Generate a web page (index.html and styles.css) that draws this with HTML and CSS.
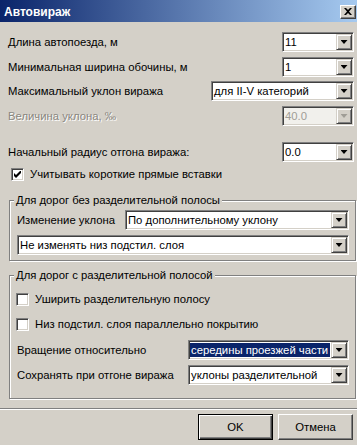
FILE: index.html
```html
<!DOCTYPE html>
<html lang="ru">

<head>
   <meta charset="UTF-8">
   <meta name="viewport" content="width=device-width, initial-scale=1.0">
   <title>Автовираж</title>
   <link rel="stylesheet" href="styles.css">
</head>

<body>
   <div class="window">
      <div class="titlebar">
         <span class="title">Автовираж</span>
         <span class="close-btn">
            <svg width="8" height="7" viewBox="0 0 8 7"><path d="M0 0h2l2 2 2-2h2L5 3.5 8 7H6L4 5 2 7H0l3-3.5z" fill="#000"/></svg>
         </span>
      </div>

      <div class="content">
         <div class="row">
            <span class="label">Длина автопоезда, м</span>
            <div class="combo"><span class="value">11</span><span class="drop"></span></div>
         </div>
         <div class="row row-2">
            <span class="label">Минимальная ширина обочины, м</span>
            <div class="combo"><span class="value">1</span><span class="drop"></span></div>
         </div>
         <div class="row row-3">
            <span class="label">Максимальный уклон виража</span>
            <div class="combo wide"><span class="value">для II-V категорий</span><span class="drop"></span></div>
         </div>
         <div class="row row-4">
            <span class="label disabled">Величина уклона, ‰</span>
            <div class="combo disabled"><span class="value">40.0</span><span class="drop"></span></div>
         </div>
         <div class="row row-5">
            <span class="label">Начальный радиус отгона виража:</span>
            <div class="combo"><span class="value">0.0</span><span class="drop"></span></div>
         </div>

         <label class="check check-top">
            <span class="box">
               <svg width="7" height="7" viewBox="0 0 7 7"><polygon points="0,2 2,4 7,-1 7,2 2,7 0,5" fill="#000"/></svg>
            </span>
            Учитывать короткие прямые вставки
         </label>

         <!-- roads without a median -->
         <fieldset class="group group-1">
            <legend>Для дорог без разделительной полосы</legend>
            <div class="row">
               <span class="label">Изменение уклона</span>
               <div class="combo slope"><span class="value">По дополнительному уклону</span><span class="drop"></span></div>
            </div>
            <div class="row row-2">
               <div class="combo full"><span class="value">Не изменять низ подстил. слоя</span><span class="drop"></span></div>
            </div>
         </fieldset>

         <!-- roads with a median -->
         <fieldset class="group group-2">
            <legend>Для дорог с разделительной полосой</legend>
            <label class="check check-1"><span class="box"></span>Уширить разделительную полосу</label>
            <label class="check check-2"><span class="box"></span>Низ подстил. слоя параллельно покрытию</label>
            <div class="row row-rot">
               <span class="label">Вращение относительно</span>
               <div class="combo median"><span class="value selected">середины проезжей части</span><span class="drop"></span></div>
            </div>
            <div class="row row-2">
               <span class="label">Сохранять при отгоне виража</span>
               <div class="combo median"><span class="value">уклоны разделительной</span><span class="drop"></span></div>
            </div>
         </fieldset>
      </div>

      <div class="separator"></div>

      <div class="buttons">
         <button class="btn default">OK</button>
         <button class="btn">Отмена</button>
      </div>
   </div>
</body>

</html>
```

FILE: styles.css
```css
body {
   margin: 0;
   background-color: #d4d0c8;
   font-family: "Liberation Sans", Arial, sans-serif;
   font-size: 11.3px;
   color: #000;
}

.window {
   width: 357px;
   height: 445px;
   overflow: hidden;
}

/* Title bar */
.titlebar {
   box-sizing: border-box;
   height: 22px;
   display: flex;
   align-items: center;
   justify-content: space-between;
   padding: 1px 1px 0 4px;
   background: linear-gradient(to right, #0a246a, #a6caf0);
   color: #fff;
   font-weight: bold;
   font-size: 12px;
}

.close-btn {
   box-sizing: border-box;
   width: 16px;
   height: 14px;
   display: flex;
   align-items: center;
   justify-content: center;
   background-color: #d4d0c8;
   border: 1px solid;
   border-color: #fff #404040 #404040 #fff;
   box-shadow: inset -1px -1px #808080;
}

.content {
   padding: 10px 3px 0 8px;
}

.row {
   display: flex;
   align-items: center;
   justify-content: space-between;
   height: 20px;
}

.row-2 { margin-top: 5px; }
.row-3 { margin-top: 4px; }
.row-4 { margin-top: 5px; }
.row-5 { margin-top: 16px; }

.label.disabled {
   color: #8a8780;
   text-shadow: 1px 1px #fff;
}

/* Combo box */
.combo {
   box-sizing: border-box;
   width: 72px;
   height: 20px;
   display: flex;
   padding: 1px;
   background-color: #fff;
   border: 1px solid;
   border-color: #808080 #fff #fff #808080;
   box-shadow: inset 1px 1px #404040, inset -1px -1px #d4d0c8;
}

.combo.wide { width: 143px; }
.combo.slope { width: 224px; }
.combo.full { width: 100%; }
.combo.median { width: 161px; }

.combo .value {
   flex: 1;
   padding-left: 1px;
   line-height: 16px;
   white-space: nowrap;
   overflow: hidden;
}

.combo .value.selected {
   margin: 1px 1px 1px 0;
   line-height: 14px;
   background-color: #0a246a;
   color: #fff;
}

.combo.disabled {
   background-color: #f1f0ec;
}

.combo.disabled .value {
   color: #a09d96;
}

.drop {
   box-sizing: border-box;
   width: 16px;
   height: 16px;
   display: flex;
   align-items: center;
   justify-content: center;
   background-color: #d4d0c8;
   border: 1px solid;
   border-color: #d4d0c8 #404040 #404040 #d4d0c8;
   box-shadow: inset 1px 1px #fff, inset -1px -1px #808080;
}

.drop::after {
   content: "";
   width: 7px;
   height: 4px;
   background-color: #000;
   clip-path: polygon(0 0, 100% 0, 50% 100%);
}

.combo.disabled .drop::after {
   background-color: #a09d96;
}

/* Check boxes */
.check {
   display: flex;
   align-items: center;
   height: 14px;
}

.check .box {
   box-sizing: border-box;
   width: 13px;
   height: 13px;
   display: flex;
   align-items: center;
   justify-content: center;
   margin-right: 6px;
   background-color: #fff;
   border: 1px solid;
   border-color: #808080 #fff #fff #808080;
   box-shadow: inset 1px 1px #404040, inset -1px -1px #d4d0c8;
}

.check-top {
   margin: 5px 0 0 3px;
}

.check-1 {
   margin: 10px 0 0 -1px;
}

.check-2 {
   margin: 11px 0 0 -1px;
}

.row-rot { margin-top: 9px; }

/* Group boxes */
.group {
   min-width: 0;
   margin: 0 -2px 0 1px;
   border: 1px solid #808080;
   box-shadow: 1px 1px #fff, inset 1px 1px #fff;
}

.group legend {
   margin-left: -3px;
   padding: 0 2px;
   line-height: 14px;
   background-color: #d4d0c8;
}

.group-1 {
   margin-top: 12px;
   padding: 3px 6px 5px 7px;
}

.group-2 {
   margin-top: 7px;
   padding: 0 6px 13px 7px;
}

.separator {
   margin-top: 9px;
   border-top: 1px solid #808080;
   border-bottom: 1px solid #fff;
}

/* Dialog buttons */
.buttons {
   display: flex;
   justify-content: flex-end;
   gap: 5px;
   padding: 4px 4px 0 0;
}

.btn {
   box-sizing: border-box;
   width: 75px;
   height: 26px;
   padding: 0;
   font: inherit;
   color: #000;
   background-color: #d4d0c8;
   border: 1px solid;
   border-color: #fff #404040 #404040 #fff;
   box-shadow: inset -1px -1px #808080;
}

.btn.default {
   border: 1px solid #000;
   box-shadow: inset 1px 1px #fff, inset -1px -1px #404040, inset -2px -2px #808080;
}
```
